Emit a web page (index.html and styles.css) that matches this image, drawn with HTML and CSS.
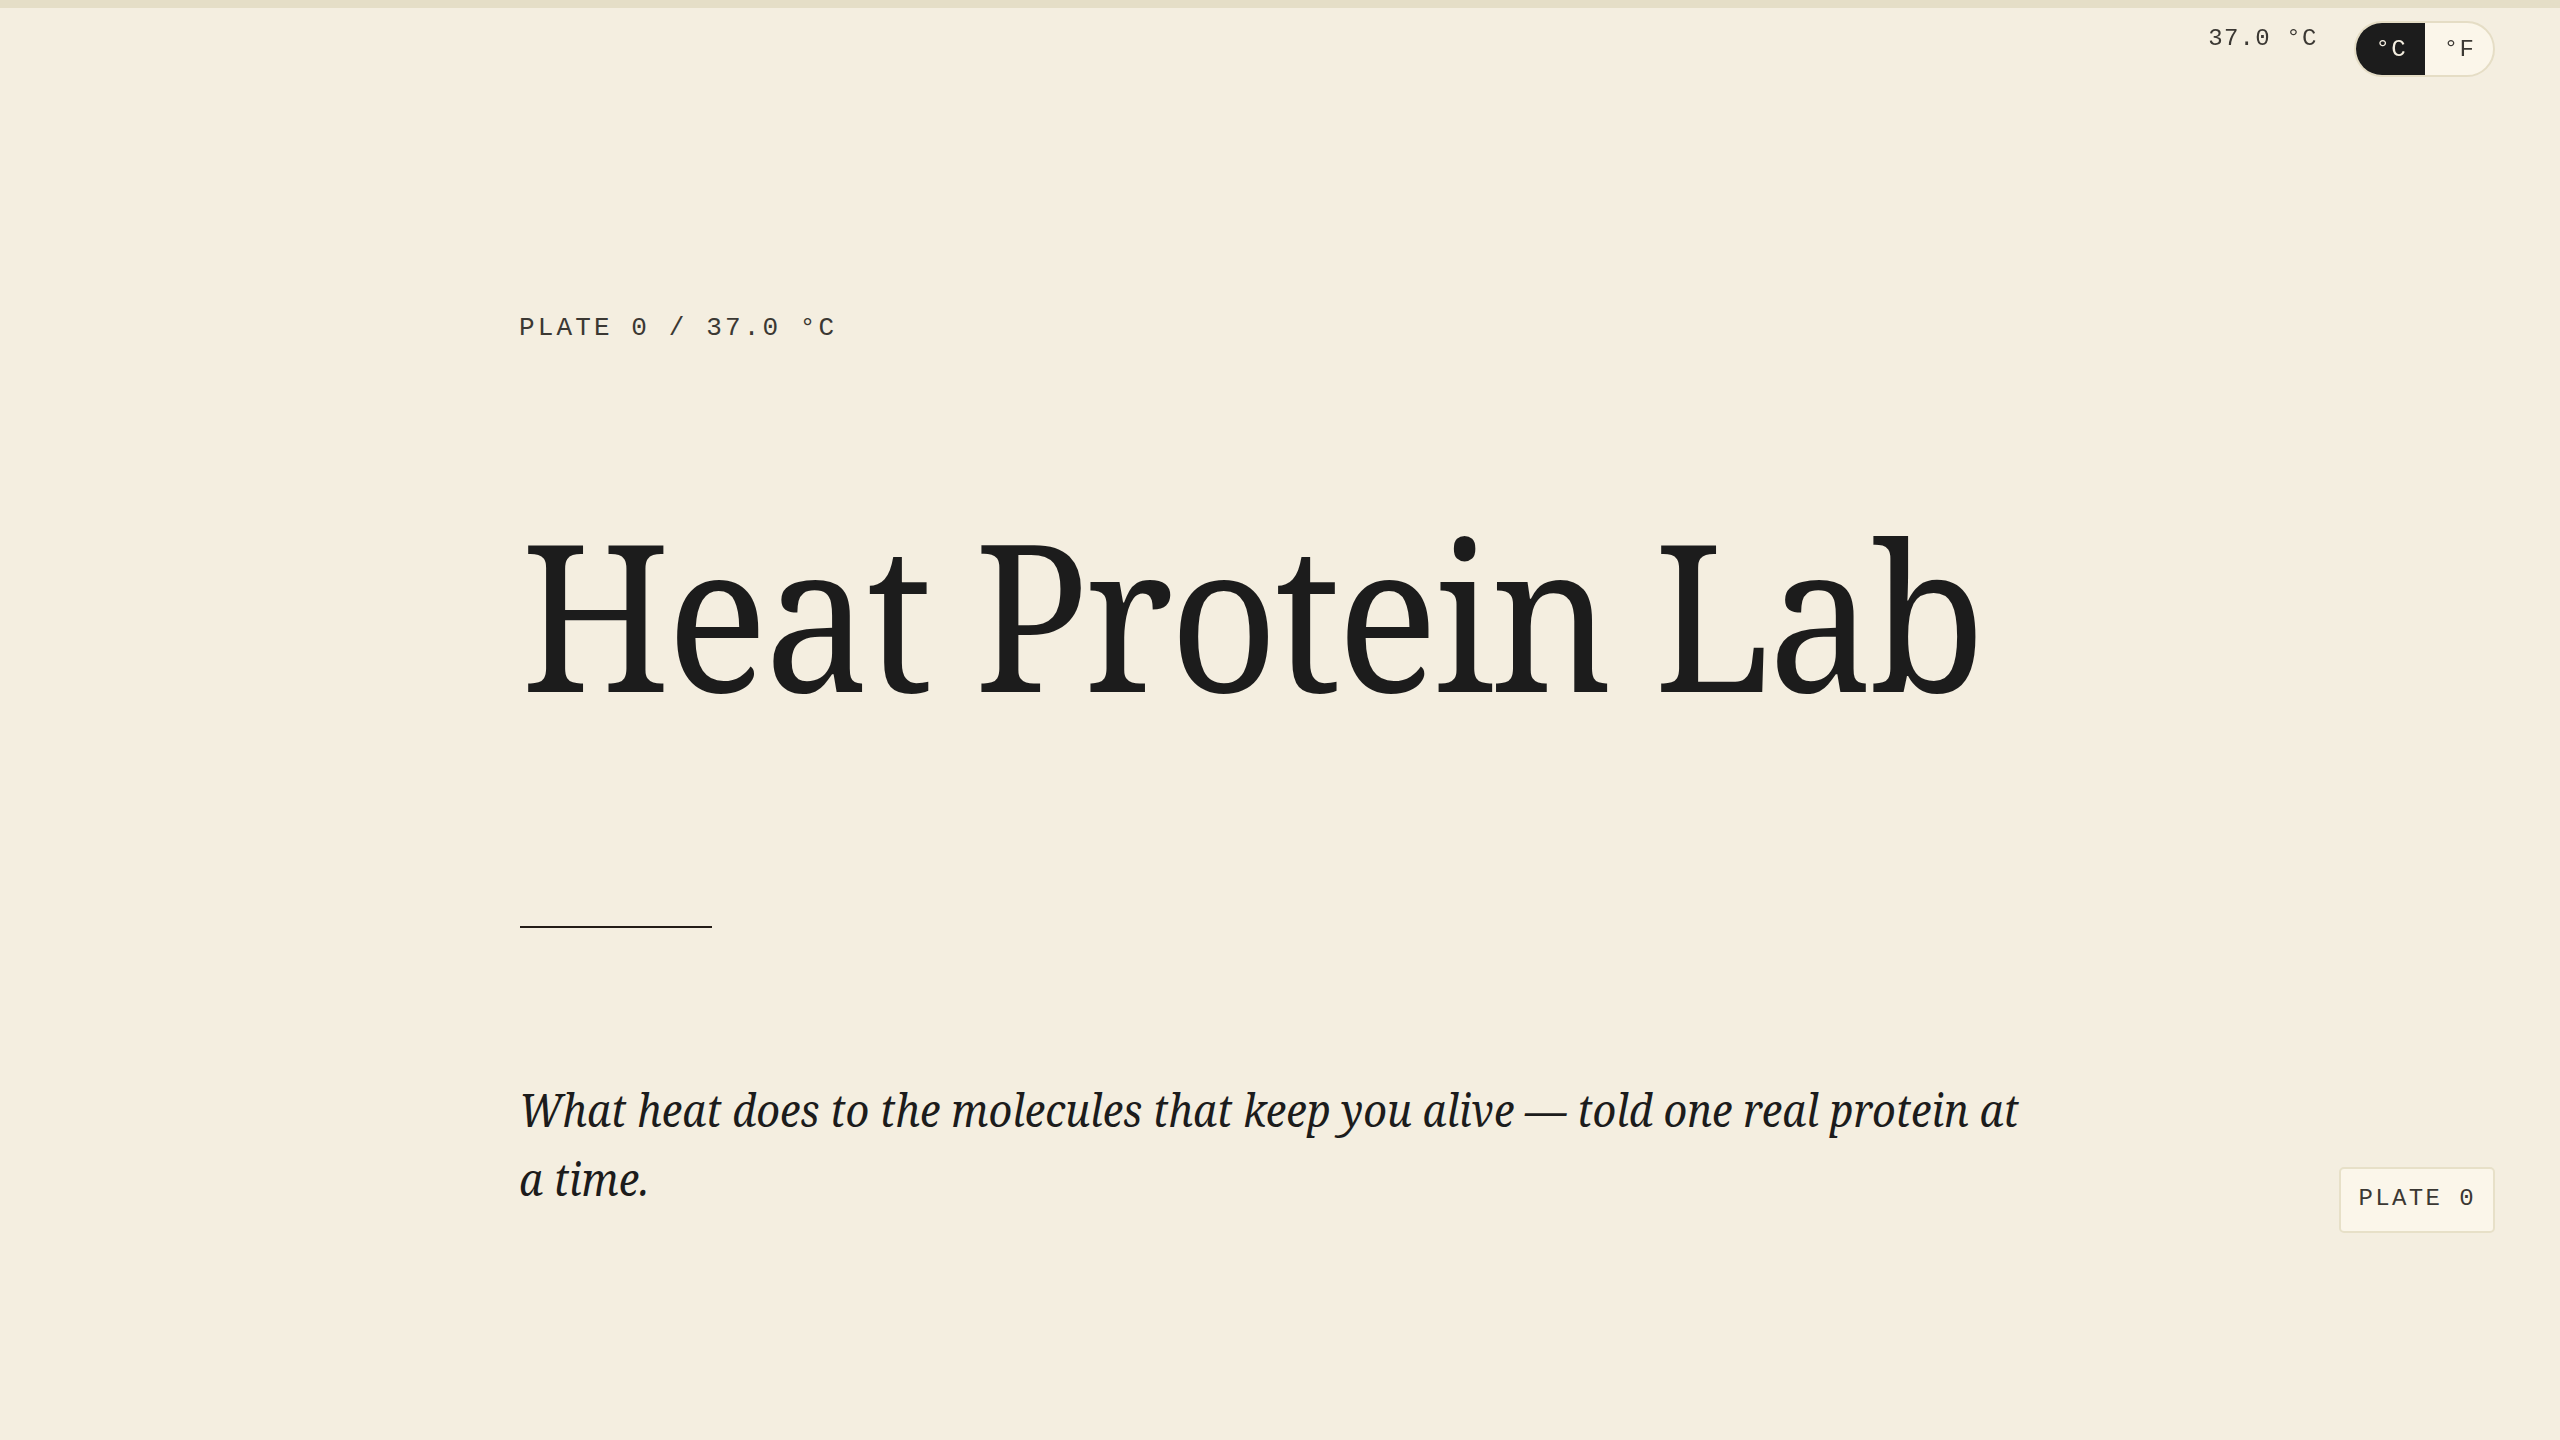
FILE: index.html
```html
<!DOCTYPE html>
<html lang="en">
<head>
<meta charset="utf-8">
<title>Heat Protein Lab</title>
<link rel="stylesheet" href="styles.css">
</head>
<body>
<div class="progress"></div>

<header class="controls">
  <span class="temp-readout">37.0 °C</span>
  <div class="unit-toggle">
    <button class="unit unit--active">°C</button>
    <button class="unit">°F</button>
  </div>
</header>

<main class="page">
  <section class="hero">
    <p class="eyebrow">PLATE 0 / 37.0 °C</p>
    <h1 class="title"><span class="title-text">Heat Protein Lab</span></h1>
    <hr class="rule">
    <p class="lede"><span class="lede-text">What heat does to the molecules that keep you alive — told one real protein at a time.</span></p>
  </section>
</main>

<div class="plate-badge">PLATE 0</div>
</body>
</html>
```
FILE: styles.css
```css
html, body {
  margin: 0;
  padding: 0;
}
body {
  background: #f4eee0;
  color: #1c1c1c;
  font-family: "Noto Serif", "Liberation Serif", serif;
  min-height: 1440px;
}

.progress {
  height: 8px;
  background: #e5dec7;
}

.controls {
  position: fixed;
  top: 21px;
  right: 65px;
  display: flex;
  align-items: flex-start;
  gap: 36px;
}
.temp-readout {
  font-family: "Liberation Mono", monospace;
  font-size: 24px;
  line-height: 36px;
  letter-spacing: 0.05em;
  color: #3b3833;
}
.unit-toggle {
  display: flex;
  border: 2px solid #e5ddc5;
  border-radius: 999px;
  overflow: hidden;
  background: #fbf6ea;
}
.unit {
  border: 0;
  margin: 0;
  height: 52px;
  padding: 0 18px 0 19px;
  font-family: "Liberation Mono", monospace;
  font-size: 24px;
  letter-spacing: 0.05em;
  background: transparent;
  color: #3b3833;
}
.unit--active {
  background: #1c1c1c;
  color: #f4eee0;
  padding: 0 18px 0 20px;
}

.page {
  width: 1522px;
  margin: 0 auto;
}
.hero {
  padding-top: 301px;
}
.eyebrow {
  margin: 0;
  font-family: "Liberation Mono", monospace;
  font-size: 26px;
  line-height: 39px;
  letter-spacing: 0.12em;
  color: #3b3833;
}
.title {
  margin: 162px 0 0 2px;
  font-size: 205px;
  line-height: 205px;
  font-weight: 400;
  letter-spacing: -0.02em;
  white-space: nowrap;
  color: #1c1c1c;
}
.title-text {
  display: inline-block;
  transform: scaleX(0.92);
  transform-origin: left center;
}
.rule {
  margin: 211px 0 0 1px;
  width: 192px;
  height: 2px;
  border: 0;
  background: #231c17;
}
.lede {
  margin: 147px 0 0;
  width: 1682px;
  font-size: 46px;
  line-height: 69px;
  font-style: italic;
  color: #1c1c1c;
  transform: scaleX(0.9);
  transform-origin: left top;
}

.plate-badge {
  position: fixed;
  right: 65px;
  bottom: 207px;
  padding: 12px 17px 14px;
  border: 2px solid #e7e0c8;
  border-radius: 5px;
  background: #fbf6ea;
  font-family: "Liberation Mono", monospace;
  font-size: 24px;
  line-height: 36px;
  letter-spacing: 0.1em;
  color: #3b3833;
}
```
